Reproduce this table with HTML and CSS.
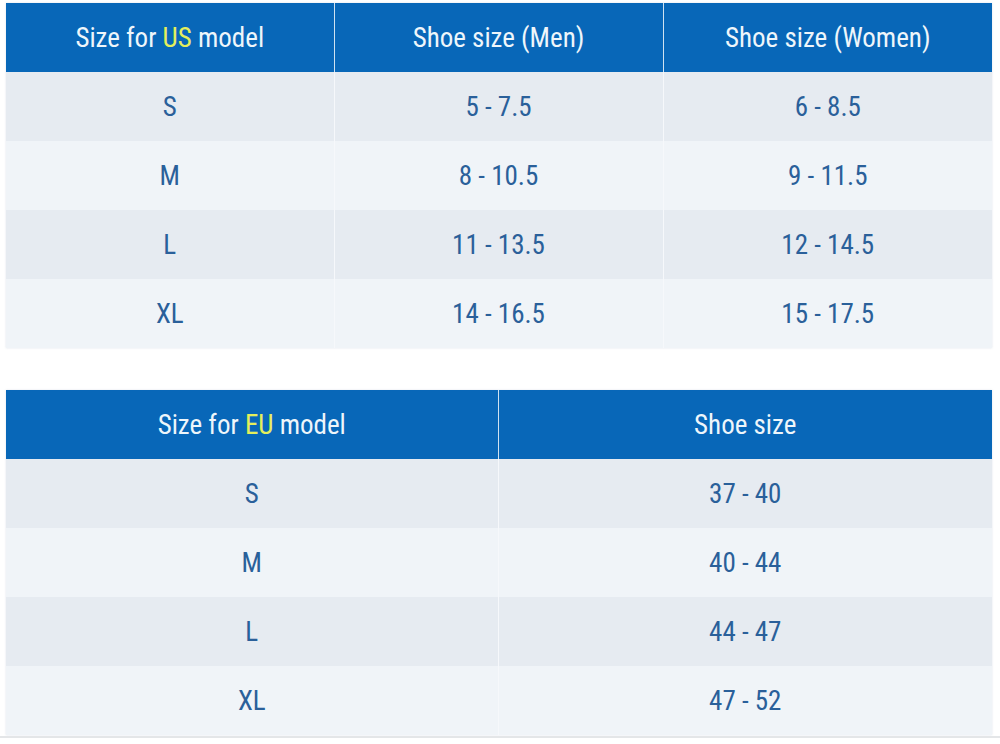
FILE: index.html
```html
<!DOCTYPE html>
<html lang="en">
<head>
<meta charset="utf-8">
<title>Size chart</title>
<link rel="stylesheet" href="styles.css">
</head>
<body>
<main class="page">
  <table class="chart chart-us">
    <colgroup><col class="c1"><col class="c2"><col class="c3"></colgroup>
    <thead>
      <tr><th><span class="t">Size for <em>US</em> model</span></th><th><span class="t">Shoe size (Men)</span></th><th><span class="t">Shoe size (Women)</span></th></tr>
    </thead>
    <tbody>
      <tr><td><span class="t">S</span></td><td><span class="t">5 - 7.5</span></td><td><span class="t">6 - 8.5</span></td></tr>
      <tr><td><span class="t">M</span></td><td><span class="t">8 - 10.5</span></td><td><span class="t">9 - 11.5</span></td></tr>
      <tr><td><span class="t">L</span></td><td><span class="t">11 - 13.5</span></td><td><span class="t">12 - 14.5</span></td></tr>
      <tr><td><span class="t">XL</span></td><td><span class="t">14 - 16.5</span></td><td><span class="t">15 - 17.5</span></td></tr>
    </tbody>
  </table>
  <table class="chart chart-eu">
    <colgroup><col class="h1"><col class="h2"></colgroup>
    <thead>
      <tr><th><span class="t">Size for <em>EU</em> model</span></th><th><span class="t">Shoe size</span></th></tr>
    </thead>
    <tbody>
      <tr><td><span class="t">S</span></td><td><span class="t">37 - 40</span></td></tr>
      <tr><td><span class="t">M</span></td><td><span class="t">40 - 44</span></td></tr>
      <tr><td><span class="t">L</span></td><td><span class="t">44 - 47</span></td></tr>
      <tr><td><span class="t">XL</span></td><td><span class="t">47 - 52</span></td></tr>
    </tbody>
  </table>
  <div class="rule"></div>
</main>
</body>
</html>
```
FILE: styles.css
```css
html, body {
  margin: 0;
  padding: 0;
  background: #ffffff;
}
.page {
  padding: 3px 8px 0 6px;
  font-family: "Roboto Condensed", Roboto, "Liberation Sans", sans-serif;
}
.chart {
  width: 986px;
  border-collapse: collapse;
  table-layout: fixed;
  box-shadow: 0 0 2px rgba(160, 175, 195, 0.35);
}
.chart-eu {
  margin-top: 42px;
}
.c1 { width: 328px; }
.c2 { width: 329px; }
.c3 { width: 329px; }
.h1 { width: 492px; }
.h2 { width: 494px; }
.chart th {
  height: 69px;
  padding: 0;
  background: #0867b8;
  color: #eef6fb;
  font-weight: 400;
  font-size: 27px;
  text-align: center;
  border-left: 1px solid #cfe2f1;
}
.chart td {
  height: 69px;
  padding: 0;
  color: #2a609a;
  font-size: 27px;
  text-align: center;
  border-left: 1px solid #f6f8fb;
}
.chart th:first-child,
.chart td:first-child {
  border-left: none;
}
.chart tbody tr:nth-child(odd) td {
  background: #e6ebf1;
}
.chart tbody tr:nth-child(even) td {
  background: #f0f4f8;
}
.chart em {
  font-style: normal;
  color: #e4ef5c;
}
.t {
  display: inline-block;
}
.rule {
  height: 2px;
  margin: 1px -8px 0 -6px;
  background: #e4e6e8;
}
```
